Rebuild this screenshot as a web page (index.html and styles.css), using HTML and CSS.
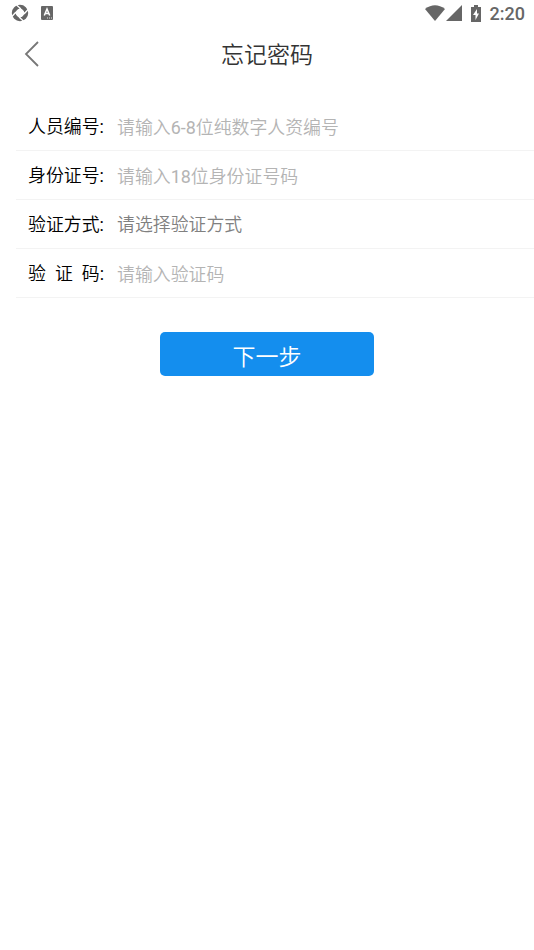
FILE: index.html
```html
<!DOCTYPE html>
<html lang="zh-CN">
<head>
<meta charset="utf-8">
<title>忘记密码</title>
<link rel="stylesheet" href="styles.css">
</head>
<body>
<div class="status">
  <svg class="sync" viewBox="0 0 18 18" width="18" height="18"><circle cx="9" cy="9" r="6.200" fill="none" stroke="#666" stroke-width="4"/><path d="M9 4 14 9 9 14 4 9z" fill="#fff"/><path d="M10 5 4.500 0M13 10 18 4.500M8 13l5.500 5M5 8 0 13.500" stroke="#fff" stroke-width="1.300"/></svg>
  <svg class="app" viewBox="0 0 12 14" width="12" height="14"><rect width="12" height="14" rx="1" fill="#666"/><path d="M3.300 9.500 6 3l2.700 6.500M4.300 7.500h3.400" fill="none" stroke="#fff" stroke-width="1.500"/><path d="M6 12h1m1 0h1m1 0h1" stroke="#ddd"/></svg>
  <span class="spacer"></span>
  <svg class="wifi" viewBox="0 0 20 16" width="20" height="16"><path d="M0 4Q10-3.500 20 4L10 16z" fill="#666"/></svg>
  <svg class="signal" viewBox="0 0 16 16" width="16" height="16"><path d="M16 0v16H0z" fill="#666"/></svg>
  <svg class="battery" viewBox="0 0 10 17" width="10" height="17"><path d="M3 0h4v2h3v15H0V2h3z" fill="#666"/><path d="M6 4 2 10h2.500v5L8 8.500H6z" fill="#fff"/></svg>
  <span class="time">2:20</span>
</div>
<header class="header">
  <svg class="back" viewBox="0 0 16 26" width="16" height="26"><path d="M14 1 2 13l12 12" fill="none" stroke="#777" stroke-width="1.800"/></svg>
  <h1>忘记密码</h1>
</header>
<main>
  <form class="form">
    <label class="row"><span class="label">人员编号<b>:</b></span><span class="value">请输入<b>6-8</b>位纯数字人资编号</span></label>
    <label class="row"><span class="label">身份证号<b>:</b></span><span class="value">请输入<b>18</b>位身份证号码</span></label>
    <label class="row"><span class="label">验证方式<b>:</b></span><span class="value select">请选择验证方式</span></label>
    <label class="row"><span class="label code"><span>验</span><span>证</span><span>码<b>:</b></span></span><span class="value">请输入验证码</span></label>
  </form>
  <button class="next" type="button">下一步</button>
</main>
</body>
</html>
```
FILE: styles.css
```css
* { box-sizing: border-box; }
body { margin: 0; background: #fff; font-family: Roboto, "Noto Sans CJK SC", sans-serif; }
.status { height: 27px; display: flex; align-items: center; padding: 0 9px 1px 11px; color: #666; }
.app { margin-left: 12px; }
.spacer { flex: 1; }
.wifi { margin-right: 1px; }
.signal { margin-right: 1px; }
.battery { margin-left: 8px; }
.time { margin-left: 9px; font-size: 18px; font-weight: 500; line-height: 27px; }
.header { height: 54px; display: grid; grid-template-columns: 48px 1fr 48px; align-items: center; }
.back { margin-left: 24px; }
h1 { margin: 0; padding-top: 3px; text-align: center; font-size: 23px; line-height: 34px; font-weight: 350; color: #333; }
.form { margin: 21px 0 0 16px; }
.row { height: 49px; display: flex; align-items: center; padding: 0 0 2px 12px; border-bottom: 1px solid #f3f3f3; font-size: 17.9px; font-weight: 350; }
.row b { font-weight: 400; }
.label { width: 89px; color: #000; white-space: nowrap; }
.code { display: flex; gap: 9px; }
.value { padding-top: 2px; color: #b4b4b4; }
.select { padding-top: 0; color: #808080; }
.next { display: block; width: 214px; height: 44px; margin: 34px auto 0; border: 0; border-radius: 5px; background: #148eee; color: #fff; font: 350 23px/36px Roboto, "Noto Sans CJK SC", sans-serif; padding: 8px 0 0; }
```
